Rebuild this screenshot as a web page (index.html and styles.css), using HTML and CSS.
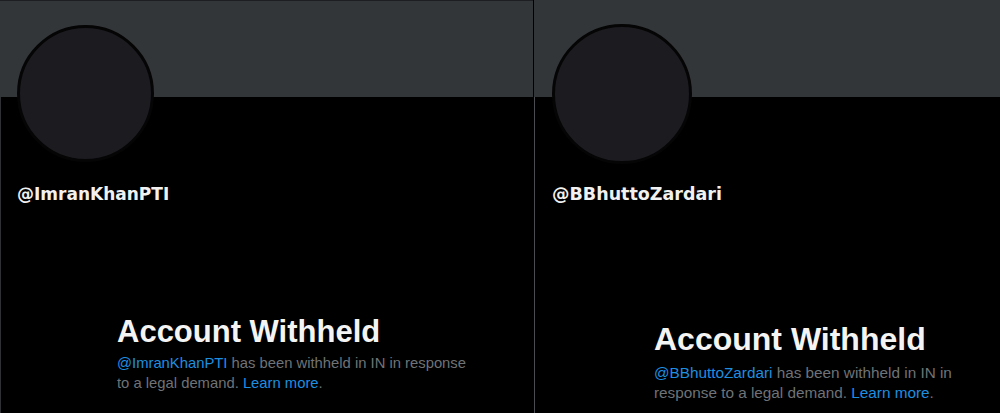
FILE: index.html
```html
<!DOCTYPE html>
<html lang="en">
<head>
    <meta charset="UTF-8">
    <meta name="viewport" content="width=device-width, initial-scale=1.0">
    <title>Account Withheld</title>
    <link rel="stylesheet" href="styles.css">
</head>
<body>
    <div class="profiles">
        <!-- first profile -->
        <div class="profile profile-left">
            <div class="banner"></div>
            <div class="avatar"></div>
            <p class="handle">@ImranKhanPTI</p>
            <div class="withheld">
                <h2>Account Withheld</h2>
                <p><span class="link">@ImranKhanPTI</span> has been withheld in IN in response to a legal demand. <span class="link">Learn more</span>.</p>
            </div>
        </div>

        <div class="split"></div>

        <!-- second profile -->
        <div class="profile profile-right">
            <div class="banner"></div>
            <div class="avatar"></div>
            <p class="handle">@BBhuttoZardari</p>
            <div class="withheld">
                <h2>Account Withheld</h2>
                <p><span class="link">@BBhuttoZardari</span> has been withheld in IN in response to a legal demand. <span class="link">Learn more</span>.</p>
            </div>
        </div>
    </div>
</body>
</html>
```

FILE: styles.css
```css
*{
    margin: 0;
    padding: 0;
    box-sizing: border-box;
}

body{
    background-color: #000;
    width: 1000px;
    height: 413px;
    overflow: hidden;
    font-family: "Liberation Sans", Arial, sans-serif;
}

.profiles{
    display: flex;
    height: 413px;
}

.profile{
    height: 413px;
    background-color: #000;
}

.profile-left{
    width: 533px;
    border-left: 1px solid #2e3034;
}

.split{
    width: 1px;
    background-color: #000;
}

.profile-right{
    flex: 1;
    border-left: 1px solid #4a4c50;
}

.banner{
    height: 97px;
    background-color: #333639;
    margin-left: -1px;
}

.profile-left .banner{
    border-top: 1px solid #1c1e21;
}

.avatar{
    width: 137px;
    height: 137px;
    border-radius: 50%;
    background-color: #1c1b20;
    border: 3px solid #050505;
}

.profile-left .avatar{
    margin: -72px 0 0 16px;
}

.profile-right .avatar{
    margin: -73px 0 0 17px;
    width: 140px;
    height: 140px;
}

.handle{
    font-family: "DejaVu Sans", Verdana, sans-serif;
    font-weight: bold;
    color: #f1f1f1;
    line-height: 20px;
}

.profile-left .handle{
    font-size: 17px;
    margin: 22px 0 0 16px;
}

.profile-right .handle{
    font-size: 17.5px;
    margin: 20px 0 0 17px;
}

.withheld h2{
    color: #f4f4f4;
    font-weight: bold;
    line-height: 36px;
}

.withheld p{
    color: #6f7377;
}

.withheld .link{
    color: #1d8fe0;
}

.profile-left .withheld{
    margin: 110px 0 0 116px;
    width: 356px;
}

.profile-left .withheld h2{
    font-size: 31px;
}

.profile-left .withheld p{
    font-size: 14.8px;
    line-height: 20px;
    margin-top: 3px;
}

.profile-right .withheld{
    margin: 117px 0 0 119px;
    width: 305px;
}

.profile-right .withheld h2{
    font-size: 32px;
}

.profile-right .withheld p{
    font-size: 15.3px;
    line-height: 20px;
    margin-top: 6px;
}
```
